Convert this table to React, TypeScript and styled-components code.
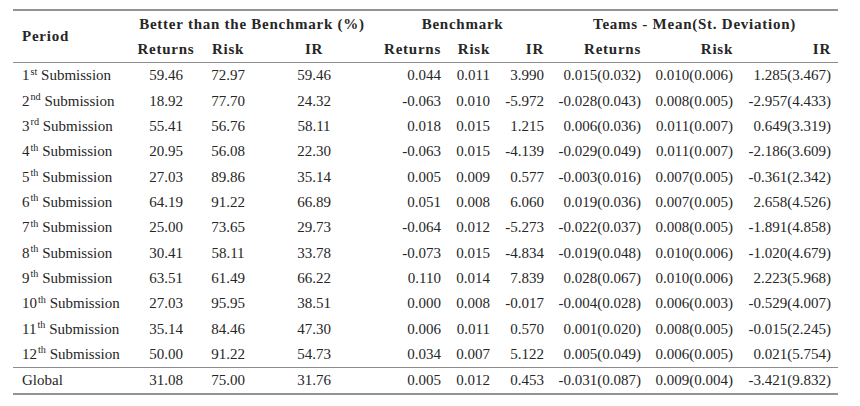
import { createGlobalStyle } from 'styled-components';
import styled from 'styled-components';

const GlobalStyle = createGlobalStyle`
  html, body {
    margin: 0;
    padding: 0;
    background: #ffffff;
  }
  body {
    font-family: 'Liberation Serif', 'Times New Roman', serif;
    color: #262626;
  }
`;

const Page = styled.div`
  padding: 9px 0 0 13px;
`;

const Table = styled.table`
  width: 825px;
  table-layout: fixed;
  border-collapse: separate;
  border-spacing: 0;
  font-size: 15px;
  line-height: 1;
`;

const HeadRow = styled.tr<{ $h: number }>`
  height: ${(p) => p.$h}px;
`;

const HeadCell = styled.th<{ $align?: 'left' | 'center' | 'right'; $top?: boolean; $bottom?: boolean }>`
  font-weight: bold;
  letter-spacing: 0.75px;
  padding: 0 ${(p) => (p.$align === 'right' ? '7px' : '0')} 0 ${(p) => (p.$align === 'left' ? '9px' : '0')};
  text-align: ${(p) => p.$align || 'center'};
  vertical-align: middle;
  border-top: ${(p) => (p.$top ? '2px solid #939393' : 'none')};
  border-bottom: ${(p) => (p.$bottom ? '1px solid #8c8c8c' : 'none')};
`;

const Row = styled.tr<{ $global?: boolean; $last?: boolean }>`
  td {
    height: 25.35px;
    border-top: ${(p) => (p.$global ? '1px solid #8c8c8c' : 'none')};
    border-bottom: ${(p) => (p.$last ? '2px solid #939393' : 'none')};
  }
`;

const Cell = styled.td<{ $align?: 'left' | 'center' | 'right' }>`
  padding: 0 ${(p) => (p.$align === 'right' ? '7px' : '0')} 0 ${(p) => (p.$align === 'left' ? '9px' : '0')};
  text-align: ${(p) => p.$align || 'center'};
  vertical-align: middle;
  white-space: nowrap;
`;

const Sup = styled.sup`
  font-size: 0.68em;
  vertical-align: 0.55em;
  line-height: 0;
  margin-left: 1px;
`;

type Align = 'left' | 'center' | 'right';

const widths = [117, 72, 52, 120, 74, 49, 54, 97, 92, 98];
const aligns: Align[] = ['left', 'center', 'center', 'center', 'right', 'right', 'right', 'right', 'right', 'right'];

const rows: [string, string, ...string[]][] = [
  ['1', 'st', '59.46', '72.97', '59.46', '0.044', '0.011', '3.990', '0.015(0.032)', '0.010(0.006)', '1.285(3.467)'],
  ['2', 'nd', '18.92', '77.70', '24.32', '-0.063', '0.010', '-5.972', '-0.028(0.043)', '0.008(0.005)', '-2.957(4.433)'],
  ['3', 'rd', '55.41', '56.76', '58.11', '0.018', '0.015', '1.215', '0.006(0.036)', '0.011(0.007)', '0.649(3.319)'],
  ['4', 'th', '20.95', '56.08', '22.30', '-0.063', '0.015', '-4.139', '-0.029(0.049)', '0.011(0.007)', '-2.186(3.609)'],
  ['5', 'th', '27.03', '89.86', '35.14', '0.005', '0.009', '0.577', '-0.003(0.016)', '0.007(0.005)', '-0.361(2.342)'],
  ['6', 'th', '64.19', '91.22', '66.89', '0.051', '0.008', '6.060', '0.019(0.036)', '0.007(0.005)', '2.658(4.526)'],
  ['7', 'th', '25.00', '73.65', '29.73', '-0.064', '0.012', '-5.273', '-0.022(0.037)', '0.008(0.005)', '-1.891(4.858)'],
  ['8', 'th', '30.41', '58.11', '33.78', '-0.073', '0.015', '-4.834', '-0.019(0.048)', '0.010(0.006)', '-1.020(4.679)'],
  ['9', 'th', '63.51', '61.49', '66.22', '0.110', '0.014', '7.839', '0.028(0.067)', '0.010(0.006)', '2.223(5.968)'],
  ['10', 'th', '27.03', '95.95', '38.51', '0.000', '0.008', '-0.017', '-0.004(0.028)', '0.006(0.003)', '-0.529(4.007)'],
  ['11', 'th', '35.14', '84.46', '47.30', '0.006', '0.011', '0.570', '0.001(0.020)', '0.008(0.005)', '-0.015(2.245)'],
  ['12', 'th', '50.00', '91.22', '54.73', '0.034', '0.007', '5.122', '0.005(0.049)', '0.006(0.005)', '0.021(5.754)'],
];

const globalRow = ['31.08', '75.00', '31.76', '0.005', '0.012', '0.453', '-0.031(0.087)', '0.009(0.004)', '-3.421(9.832)'];

const subHeads = ['Returns', 'Risk', 'IR', 'Returns', 'Risk', 'IR', 'Returns', 'Risk', 'IR'];

const App = () => {
  return (
    <Page>
      <GlobalStyle />
      <Table>
        <colgroup>
          {widths.map((w, i) => (
            <col key={i} style={{ width: w }} />
          ))}
        </colgroup>
        <thead>
          <HeadRow $h={28}>
            <HeadCell rowSpan={2} $align="left" $top $bottom>
              Period
            </HeadCell>
            <HeadCell colSpan={3} $top>
              Better than the Benchmark (%)
            </HeadCell>
            <HeadCell colSpan={3} $top>
              Benchmark
            </HeadCell>
            <HeadCell colSpan={3} $top>
              Teams - Mean(St. Deviation)
            </HeadCell>
          </HeadRow>
          <HeadRow $h={26}>
            {subHeads.map((h, i) => (
              <HeadCell key={i} $align={aligns[i + 1]} $bottom>
                {h}
              </HeadCell>
            ))}
          </HeadRow>
        </thead>
        <tbody>
          {rows.map(([num, suffix, ...values]) => (
            <Row key={num}>
              <Cell $align="left">
                {num}
                <Sup>{suffix}</Sup> Submission
              </Cell>
              {values.map((v, i) => (
                <Cell key={i} $align={aligns[i + 1]}>
                  {v}
                </Cell>
              ))}
            </Row>
          ))}
          <Row $global $last>
            <Cell $align="left">Global</Cell>
            {globalRow.map((v, i) => (
              <Cell key={i} $align={aligns[i + 1]}>
                {v}
              </Cell>
            ))}
          </Row>
        </tbody>
      </Table>
    </Page>
  );
};

export default App;
